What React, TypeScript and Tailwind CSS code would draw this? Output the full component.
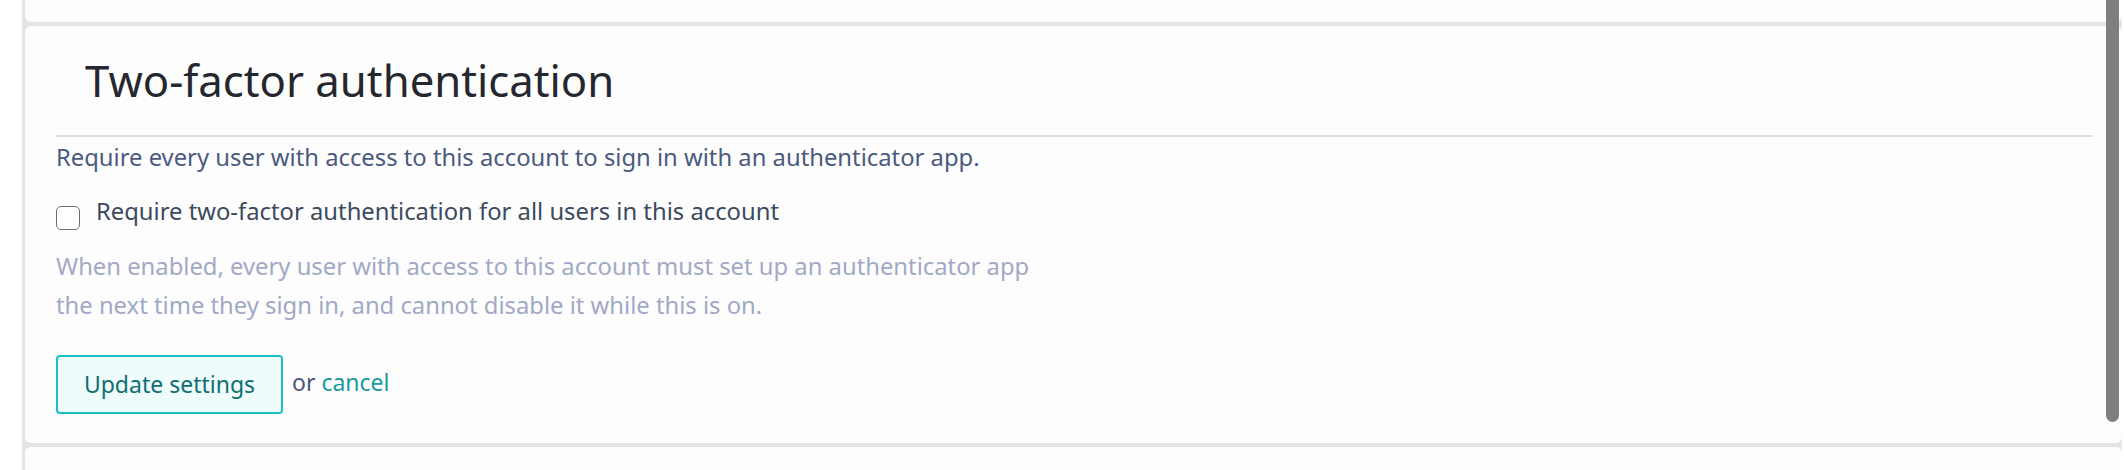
export default function App() {
  return (
    <div className="relative h-[470px] w-full overflow-hidden bg-white font-['Noto_Sans',sans-serif]">
      {/* Stacked settings cards */}
      <div className="ml-[22px] flex w-[2100px] flex-col gap-[4px] bg-[#e4e5e8] pl-[3px]">
        <div className="h-[22px] rounded-b-md bg-[#fdfdfd]" />

        <section className="rounded-md bg-[#fdfdfd] pb-[29px] pl-[31px] pr-[29px] pt-[26px]">
          <h1 className="pl-[29px] text-[43.7px] font-normal leading-[56px] text-[#25272e]">
            Two-factor authentication
          </h1>
          <div className="mt-[27px] h-[2px] bg-[#dde0e7]" />
          <p className="mt-[4px] text-[23.8px] leading-[32px] text-[#4b5a7f]">
            Require every user with access to this account to sign in with an authenticator app.
          </p>

          <label className="mt-[22px] flex items-start">
            <span className="mt-[11px] h-[24px] w-[24px] shrink-0 rounded-[5px] border-[1.5px] border-[#6f6f6f] bg-white" />
            <span className="ml-[16px] text-[23.8px] leading-[32px] text-[#3c4a5e]">
              Require two-factor authentication for all users in this account
            </span>
          </label>

          <p className="mt-[17px] text-[23.8px] leading-[39px] text-[#a1a9c5]">
            When enabled, every user with access to this account must set up an authenticator app
            <br />
            the next time they sign in, and cannot disable it while this is on.
          </p>

          <div className="mt-[30px] flex items-center">
            <button className="flex h-[59px] w-[227px] items-center justify-center rounded-[4px] border-2 border-[#19c1c6] bg-[#effcfc] text-[23px] text-[#0f6f72]">
              Update settings
            </button>
            <span className="mb-[4px] ml-[9px] text-[23px] text-[#4c5578]">
              or <a className="text-[#1a9a9c]">cancel</a>
            </span>
          </div>
        </section>

        <div className="h-[40px] rounded-t-md bg-[#fdfdfd]" />
      </div>

      {/* overlay scrollbar */}
      <div className="absolute right-[5px] top-[-20px] h-[442px] w-[13px] rounded-full bg-[#7f7f7f]" />
    </div>
  );
}
